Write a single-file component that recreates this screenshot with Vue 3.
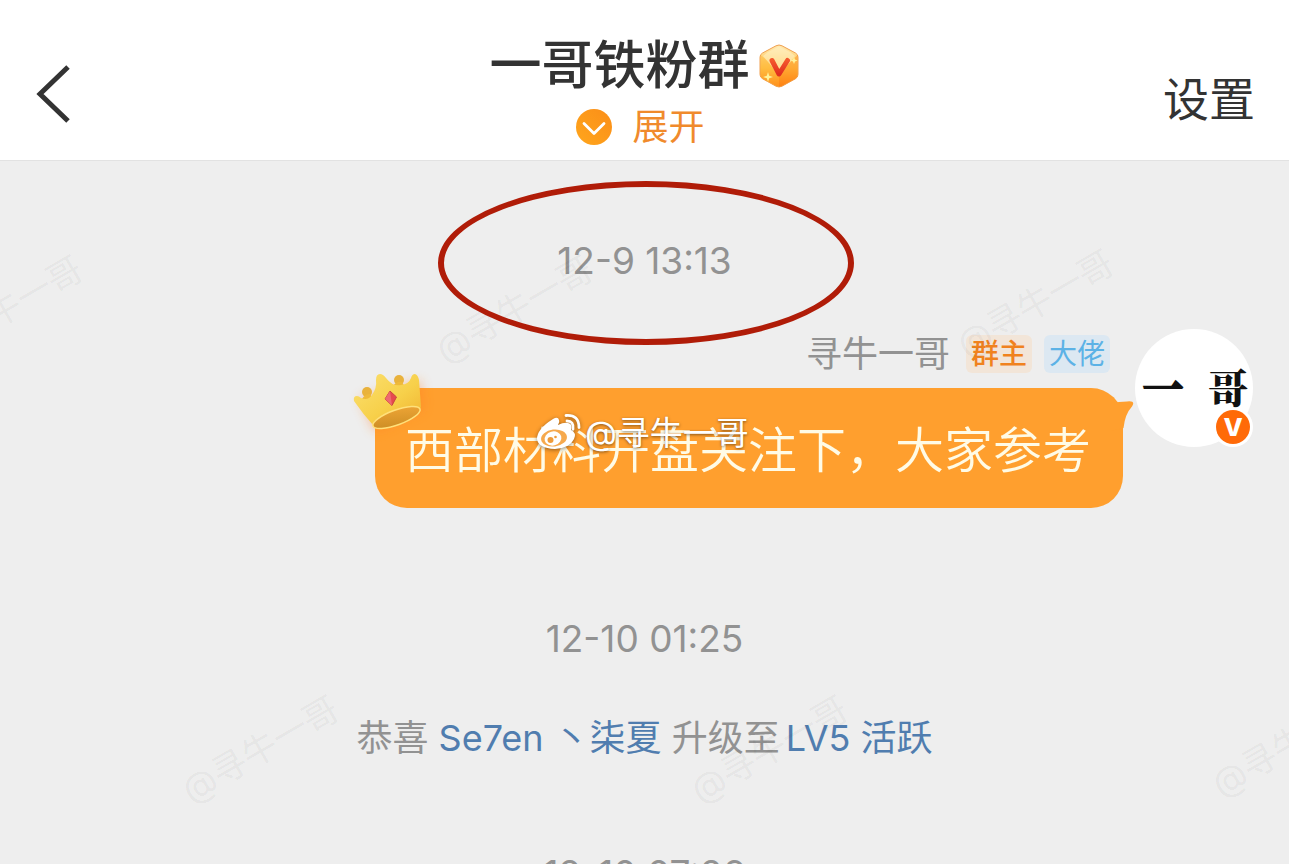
<script setup>
const marks = [
  { x: 4, y: 309 },
  { x: 514, y: 309 },
  { x: 1035, y: 303 },
  { x: 260, y: 749 },
  { x: 769, y: 749 },
  { x: 1290, y: 743 },
]
</script>

<template>
  <div class="page">
    <header class="bar">
      <button class="back" type="button" aria-label="返回">
        <svg width="38" height="60" viewBox="0 0 38 60" fill="none" stroke="#333" stroke-width="5">
          <path d="M34 3 6 30 34 57" />
        </svg>
      </button>
      <div class="heading">
        <h1 class="title">
          一哥铁粉群
          <svg class="gem" width="42" height="46" viewBox="0 0 42 46">
            <defs>
              <linearGradient id="gemBody" x1="0" y1="0" x2="0" y2="1">
                <stop offset="0" stop-color="#ffe9b0" />
                <stop offset=".55" stop-color="#ffc44d" />
                <stop offset="1" stop-color="#ff7a10" />
              </linearGradient>
              <linearGradient id="gemV" x1="0" y1="0" x2="0" y2="1">
                <stop offset="0" stop-color="#f4572c" />
                <stop offset="1" stop-color="#e02f1f" />
              </linearGradient>
            </defs>
            <path d="M18 2.800q3-1.600 6 0L37.500 10q2.500 1.400 2.500 4.200v17.300q0 2.800-2.500 4.200L24 43.200q-3 1.600-6 0L4.500 35.700Q2 34.300 2 31.500V14.200Q2 11.400 4.500 10z" fill="url(#gemBody)" stroke="#f0a050" stroke-width="1" />
            <path d="M2.500 12 21 27v17l-3-1L4.500 35.700Q2.500 34 2.500 31.500z" fill="#ffb22e" opacity=".4" />
            <path d="M39.500 12 21 31v13l3-1 13.500-7.300q2-1.400 2-4.200z" fill="#ff8a14" opacity=".45" />
            <path d="M10 9 21 3.500 32 9l5 4-16 19L5 13z" fill="#fff2c8" opacity=".55" />
            <path d="M14 17.500 21 31l8.500-13.500" fill="none" stroke="url(#gemV)" stroke-width="5" stroke-linecap="round" stroke-linejoin="round" />
            <path d="m10 29 1.200 3.800L15 34l-3.800 1.200L10 39l-1.200-3.800L5 34l3.800-1.200zM36 14l1 2.500 2.500 1-2.500 1-1 2.500-1-2.500-2.500-1 2.500-1z" fill="#fff39a" />
          </svg>
        </h1>
        <button class="expand" type="button">
          <svg width="36" height="36" viewBox="0 0 36 36">
            <defs>
              <linearGradient id="expandFill" x1="0" y1="1" x2="1" y2="0">
                <stop offset="0" stop-color="#ffa61c" />
                <stop offset="1" stop-color="#fb8e18" />
              </linearGradient>
            </defs>
            <circle cx="18" cy="18" r="18" fill="url(#expandFill)" />
            <path d="m8 14.500 10 10 10-10" fill="none" stroke="#fff" stroke-width="2.800" stroke-linecap="round" stroke-linejoin="round" />
          </svg>
          展开
        </button>
      </div>
      <button class="settings" type="button">设置</button>
    </header>

    <main class="chat">
      <time class="stamp first">12-9 13:13<span class="ring"></span></time>

      <article class="message">
        <div class="body">
          <div class="author">
            <span class="name">寻牛一哥</span>
            <span class="tag owner">群主</span>
            <span class="tag boss">大佬</span>
          </div>
          <div class="bubble">
            <svg class="crown" width="100" height="100" viewBox="0 0 100 100">
              <defs>
                <linearGradient id="crownGold" x1="0" y1="0" x2="1" y2="1">
                  <stop offset="0" stop-color="#fbe070" />
                  <stop offset=".55" stop-color="#f7d04a" />
                  <stop offset="1" stop-color="#f0b02e" />
                </linearGradient>
                <linearGradient id="crownInside" x1="0" y1="1" x2="1" y2="0">
                  <stop offset="0" stop-color="#c88a22" />
                  <stop offset="1" stop-color="#f2a838" />
                </linearGradient>
                <filter id="crownGlow" x="-40%" y="-40%" width="180%" height="180%">
                  <feGaussianBlur stdDeviation="6" />
                </filter>
              </defs>
              <path d="M20 46 82 28 84 58 36 80z" fill="#ff7a22" opacity=".4" filter="url(#crownGlow)" />
              <circle cx="28" cy="40" r="5" fill="#e9b23c" />
              <circle cx="60" cy="28" r="5" fill="#e9b23c" />
              <path d="M23 47q3-5 8-5l4 6-8 6zM54 34q4-5 9-4l4 7-9 3z" fill="#efb93a" />
              <path d="M15 49q-1-5 3-5 2 0 4 2 7 3 11-3 5-7 4-15 0-6 4-6 3 0 6 4 7 9 15 7 8-1 10-7 1-4 4-4 3 1 4 6l2 27q-3 10-21 16-20 6-27 2Q24 62 15 49z" fill="url(#crownGold)" />
              <ellipse cx="57.500" cy="65.500" rx="25" ry="7.500" transform="rotate(-20 57.500 65.500)" fill="url(#crownInside)" stroke="#ffe07a" stroke-width="1.500" />
              <path d="m51 39 6.500 6-4.500 8.500-7-6.500z" fill="#e6484f" stroke="#c9483e" stroke-width="1" />
              <path d="m51 39 2 14.500-7-6.500z" fill="#ee6a70" />
            </svg>
            <svg class="tail" width="24" height="34" viewBox="0 0 24 34">
              <path d="M0 6q8-1.500 16-1.500 9-1 5 5Q14 17 12.500 31L0 34z" fill="#ff9f2e" />
            </svg>
            <p class="text">西部材料开盘关注下，大家参考</p>
            <span class="credit">
              <svg width="46" height="40" viewBox="0 0 46 40">
                <path d="M18 6q5-3 6 1 1 2-1 5 6-3 10-2 5 1 3 7 6 3 3 9-4 9-19 10Q3 35 2 26 2 16 18 6z" fill="#fff" />
                <ellipse cx="19" cy="25" rx="13" ry="8.500" transform="rotate(-7 19 25)" fill="#f6a94d" />
                <ellipse cx="18" cy="25.500" rx="8.500" ry="7" transform="rotate(-15 18 25.500)" fill="#fff" />
                <circle cx="15.500" cy="27" r="3" fill="#ef9b3a" />
                <circle cx="20.500" cy="24" r="1.300" fill="#ef9b3a" />
                <path d="M32 8q7 0 6 8M31 2.500q13-1 13 12" fill="none" stroke="#fff" stroke-width="2.800" stroke-linecap="round" />
              </svg>
              @寻牛一哥
            </span>
          </div>
        </div>
        <div class="avatar">
          <span class="stroke">一</span><span>哥</span>
          <svg class="verified" width="42" height="42" viewBox="0 0 42 42">
            <circle cx="21" cy="21" r="20" fill="#fff" />
            <circle cx="21" cy="21" r="17" fill="#ff6a08" />
            <text x="21" y="30" text-anchor="middle" fill="#fff" font-family="Inter" font-size="25" font-weight="800">V</text>
          </svg>
        </div>
      </article>

      <time class="stamp second">12-10 01:25</time>
      <p class="notice">恭喜 <a href="#">Se7en <span>丶柒夏</span></a> 升级至<a class="level" href="#">LV5 活跃</a></p>
      <time class="stamp third">12-10 07:26</time>
    </main>

    <div class="marks" aria-hidden="true">
      <span v-for="(m, i) in marks" :key="i" class="mark" :style="{ left: m.x + 'px', top: m.y + 'px' }">@寻牛一哥</span>
    </div>
  </div>
</template>

<style>
body {
  margin: 0;
  background: #eee;
}
</style>

<style scoped>
.page {
  position: relative;
  height: 100vh;
  overflow: hidden;
  background: #eee;
  color: #333;
  font-family: Inter, "Noto Sans CJK SC", sans-serif;
}
button {
  border: 0;
  padding: 0;
  background: none;
  color: inherit;
  font: inherit;
  cursor: pointer;
}
svg {
  display: block;
  flex: none;
}
.bar {
  display: grid;
  grid-template-columns: 1fr auto 1fr;
  box-sizing: border-box;
  height: 161px;
  padding: 0 34px;
  background: #fff;
  border-bottom: 1px solid #e2e2e2;
}
.back {
  justify-self: start;
  align-self: start;
  margin-top: 64px;
}
.heading {
  display: flex;
  flex-direction: column;
  align-items: center;
  padding-top: 36px;
}
.title {
  display: flex;
  align-items: center;
  gap: 8px;
  margin: 0;
  font-size: 52px;
  line-height: 60px;
  font-weight: 500;
}
.expand {
  display: flex;
  align-items: center;
  gap: 20px;
  margin: 8px 8px 0 0;
  color: #f08a2c;
  font-size: 36px;
  line-height: 46px;
}
.settings {
  justify-self: end;
  align-self: start;
  margin-top: 69px;
  font-size: 46px;
  line-height: 60px;
}
.chat {
  display: flex;
  flex-direction: column;
  padding-top: 74px;
}
.stamp {
  position: relative;
  align-self: center;
  color: #929292;
  font-size: 37px;
  line-height: 52px;
  white-space: nowrap;
}
.ring {
  position: absolute;
  top: 50%;
  left: 50%;
  z-index: 2;
  box-sizing: border-box;
  width: 416px;
  height: 164px;
  margin: 2px 0 0 2px;
  border: 6px solid #b01c08;
  border-radius: 50%;
  transform: translate(-50%, -50%);
}
.message {
  display: flex;
  justify-content: flex-end;
  gap: 12px;
  margin-top: 42px;
  padding-right: 36px;
}
.body {
  display: flex;
  flex-direction: column;
  align-items: flex-end;
  padding-top: 6px;
}
.author {
  display: flex;
  align-items: center;
  gap: 12px;
  margin-right: 13px;
  line-height: 38px;
}
.name {
  margin-right: 4px;
  color: #929292;
  font-size: 36px;
}
.tag {
  padding: 0 5px;
  border-radius: 6px;
  font-size: 28px;
}
.owner {
  background: #f2e5d8;
  color: #f0821e;
  font-weight: 500;
}
.boss {
  background: #dce8f2;
  color: #5cb2e6;
}
.bubble {
  position: relative;
  margin-top: 15px;
  padding: 31px 32px 25px 30px;
  border-radius: 32px;
  background: #ff9f2e;
}
.text {
  margin: 0;
  color: #fffbe6;
  font-size: 49px;
  font-weight: 350;
  line-height: 64px;
}
.crown {
  position: absolute;
  top: -36px;
  left: -36px;
}
.tail {
  position: absolute;
  top: 9px;
  right: -12px;
}
.credit {
  position: absolute;
  top: 24px;
  left: 160px;
  display: flex;
  align-items: center;
  gap: 4px;
  color: #fff;
  font-size: 33px;
  line-height: 42px;
  white-space: nowrap;
  text-shadow: 0 1px 3px #00000080;
}
.credit svg {
  filter: drop-shadow(0 1px 2px #00000070);
}
.avatar {
  position: relative;
  display: flex;
  justify-content: space-between;
  box-sizing: border-box;
  width: 118px;
  height: 118px;
  padding: 28px 5px 0 8px;
  border-radius: 50%;
  background: #fff;
  color: #111;
  font-family: "Noto Serif CJK SC", "Noto Sans CJK SC", serif;
  font-size: 40px;
  font-weight: 900;
  line-height: 58px;
}
.stroke {
  -webkit-text-stroke: 2px #111;
}
.verified {
  position: absolute;
  right: -1px;
  bottom: -1px;
}
.second {
  margin-top: 105px;
}
.notice {
  margin: 47px 0 0;
  color: #929292;
  font-size: 36px;
  line-height: 52px;
  text-align: center;
}
.notice a {
  color: #507daf;
  text-decoration: none;
}
.notice .level {
  margin-left: 6px;
}
.third {
  margin-top: 84px;
}
.marks {
  position: absolute;
  inset: 0;
  overflow: hidden;
  pointer-events: none;
}
.mark {
  position: absolute;
  color: #0000000d;
  font-size: 35px;
  line-height: 40px;
  white-space: nowrap;
  transform: translate(-50%, -50%) rotate(-30deg);
}
</style>
